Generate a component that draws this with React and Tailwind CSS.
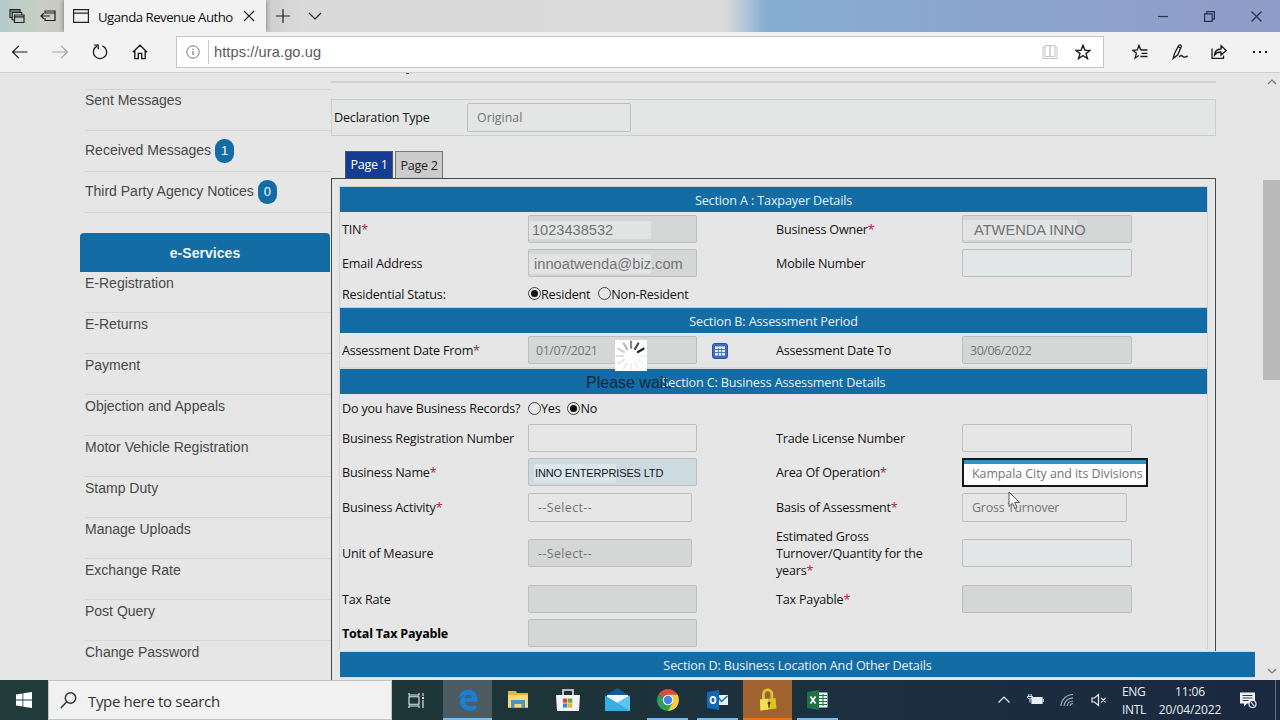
import { useState } from "react";
import clsx from "clsx";

const messages = [
  { label: "Sent Messages" },
  { label: "Received Messages", count: 1 },
  { label: "Third Party Agency Notices", count: 0 },
];

const services = [
  "E-Registration",
  "E-Returns",
  "Payment",
  "Objection and Appeals",
  "Motor Vehicle Registration",
  "Stamp Duty",
  "Manage Uploads",
  "Exchange Rate",
  "Post Query",
  "Change Password",
];

function Icon({ size = 16, box = 16, className, children }) {
  return (
    <svg
      width={size}
      height={size}
      viewBox={`0 0 ${box} ${box}`}
      fill="none"
      stroke="currentColor"
      strokeWidth="1.2"
      className={clsx("block shrink-0", className)}
    >
      {children}
    </svg>
  );
}

function TitleBar() {
  return (
    <div className="flex h-8 shrink-0 bg-[linear-gradient(90deg,#b5ccc8_0px,#c9cfc4_40px,#c8c8c2_64px,#cfcfcf_268px,#dadada_300px,#dadbda_725px,#86aed1_766px,#8ba4cc_1000px,#8f9cc8_1280px)] text-[#222]">
      <div className="flex w-16 items-center gap-[15px] pl-[9px]">
        <Icon>
          <path d="M3 9.500H1V1.500h10V4M1 3h10" />
          <path d="M5.500 7h9.500v7.500H5.500zM5.500 8.800H15M3.200 12V4.500h9.500V7M3.200 12h2" />
        </Icon>
        <Icon>
          <path d="M5 5.500V3h10v9.500H5V10M5 5h10M1 8h9M3.800 5.300L1 8l2.800 2.700" />
        </Icon>
      </div>
      <div className="flex w-[202px] items-center bg-[#f2f2f2] pl-[9px] shadow-[0_0_5px_rgba(0,0,0,0.45)]">
        <Icon>
          <path d="M.6 1.600h14.800v12.800H.6zM.6 5.200h14.800" />
        </Icon>
        <span className="ml-[9px] w-[138px] pt-px text-[13.200px] leading-5 tracking-[-0.5px] whitespace-nowrap text-[#111]">
          Uganda Revenue Autho
        </span>
        <Icon size={12} box={12} className="ml-[7px]">
          <path d="M1 1l10 10M11 1L1 11" />
        </Icon>
      </div>
      <div className="flex flex-1 items-center pl-[10px]">
        <Icon size={14} box={14}>
          <path d="M7 0v14M0 7h14" />
        </Icon>
        <Icon size={14} box={14} className="ml-[18px]">
          <path d="M1 4l6 6 6-6" />
        </Icon>
      </div>
      <div className="flex items-center gap-9 pr-[18px] text-[#25304f]">
        <Icon size={10} box={10}>
          <path d="M0 5.500h10" />
        </Icon>
        <Icon size={11} box={11}>
          <path d="M.6 2.800h7.600v7.600H.6zM2.800 2.600V.6h7.600v7.600H8.400" />
        </Icon>
        <Icon size={11} box={11}>
          <path d="M.5 .5l10 10M10.500 .5l-10 10" />
        </Icon>
      </div>
    </div>
  );
}

function Toolbar() {
  return (
    <div className="flex h-[41px] shrink-0 items-center border-b border-[#cfd1d1] bg-[#f2f2f2] pl-3 text-[#1c1c1c]">
      <div className="flex gap-6">
        <Icon>
          <path d="M.5 8h15M6.800 1.800L.6 8l6.200 6.200" />
        </Icon>
        <Icon className="text-[#a5a5a5]">
          <path d="M.5 8h15M9.200 1.800L15.400 8l-6.200 6.200" />
        </Icon>
        <Icon>
          <path d="M10.400 1.900A6.600 6.600 0 1 1 5 2.200M2.200 1.200h4v4" strokeWidth="1.300" />
        </Icon>
        <Icon>
          <path d="M.8 8.300L8 1.300l7.200 7M2.800 6.800v7.800h3.500V9.400h3.400v5.200h3.500V6.800" strokeWidth="1.400" />
        </Icon>
      </div>
      <div className="ml-7 flex h-8 w-[928px] items-center border border-[#c3c4c4] bg-white pl-[9px]">
        <Icon size={14} box={14} className="text-[#777]">
          <circle cx="7" cy="7" r="6.200" strokeWidth="1" />
          <path d="M7 6v4M7 3.800v1.200" />
        </Icon>
        <span className="ml-[8px] h-6 w-px bg-[#c9c9c9]" />
        <span className="ml-[5px] flex-1 pt-px font-['Liberation_Sans',sans-serif] text-[14.600px] tracking-[0.1px] text-[#5a5a5a]">
          https://ura.go.ug
        </span>
        <Icon className="text-[#c4c4c4]">
          <path d="M3 1.500h5v11H3zM8 1.500h5v11H8z" strokeWidth="1" />
          <path d="M3 3H1v11.500h14V3h-2" strokeWidth="1" />
        </Icon>
        <Icon className="mr-3 ml-[17px]">
          <path d="M8 1.300l1.900 4.900 5.200.2-4.100 3.200 1.500 5L8 11.700l-4.500 2.900 1.500-5L.9 6.400l5.200-.2z" strokeWidth="1.400" />
        </Icon>
      </div>
      <div className="ml-7 flex gap-6">
        <Icon>
          <path d="M9.600 5.600h-1L7 1.500 5.300 6 .8 6.300l3.600 3-1.300 4.800L7 11.500M9 6h6.500M9.500 9.300h6M8.500 12.500h7" strokeWidth="1.300" />
        </Icon>
        <Icon>
          <path d="M1.200 14.500L2.500 9.500 6.600 1.600Q8.500-.2 9.400 2.200L5.800 10.800zM6.300 3l2.400 1.200M7 13q2-2.500 3.500-.8t5.300 0" strokeWidth="1.300" />
        </Icon>
        <Icon className="-ml-px">
          <path d="M1 4.500V14.400h11.500V11.500M3.500 11Q4 5.200 10 5V1.800L15.300 6.500 10 11V8Q6 7.800 3.500 11z" strokeWidth="1.300" />
        </Icon>
        <Icon className="ml-px">
          <path d="M1 8h2M7 8h2M13 8h2" strokeWidth="1.800" />
        </Icon>
      </div>
    </div>
  );
}

function Sidebar() {
  return (
    <div className="ml-20 flex w-[251px] shrink-0 flex-col font-['Liberation_Sans',sans-serif] text-[14px] text-[#484848]">
      <div className="mt-4 ml-[5px] border-t border-[#cdd5d6]">
        {messages.map((m, i) => (
          <div
            key={m.label}
            className={clsx(
              "flex h-[41px] gap-1 border-b border-[#d2d8d9]",
              i === 0 ? "items-start" : "items-center"
            )}
          >
            <span className="mb-px">{m.label}</span>
            {m.count !== undefined && (
              <span className="flex h-6 w-[19px] items-center justify-center rounded-[9px] bg-[#136ca4] text-[13px] text-white">
                {m.count}
              </span>
            )}
          </div>
        ))}
      </div>
      <div className="mt-5 flex h-[39px] w-[250px] shrink-0 items-center justify-center rounded-t-[4px] bg-[#136ca4] pt-px text-[14px] font-bold tracking-[0.05px] text-[#eef5f9]">
        e-Services
      </div>
      <div className="ml-[5px]">
        {services.map((s) => (
          <div key={s} className="h-[41px] border-b border-[#d2d8d9] leading-[23px]">
            {s}
          </div>
        ))}
      </div>
    </div>
  );
}

function SectionBar({ children, className }) {
  return (
    <div
      className={clsx(
        "flex h-[25px] shrink-0 items-center justify-center bg-[#136ca4] pt-[3px] text-[12.600px] tracking-[-0.14px] text-[#e6f3fa]",
        className
      )}
    >
      {children}
    </div>
  );
}

function Row({ className, children }) {
  return (
    <div className={clsx("grid grid-cols-[188px_246px_188px_1fr] items-center", className)}>
      {children}
    </div>
  );
}

function Label({ required, children }) {
  return (
    <span className="pt-px pl-[2px] text-[12.600px] leading-[17px] tracking-[-0.2px] whitespace-nowrap text-[#141414]">
      {children}
      {required && <span className="text-[#b02046]">*</span>}
    </span>
  );
}

function Field({ className, children }) {
  return (
    <span
      className={clsx(
        "flex h-7 items-center rounded-[2px] border border-[#babfbf] pt-[2px] text-[12.400px] whitespace-nowrap text-[#737373]",
        className
      )}
    >
      {children}
    </span>
  );
}

function Radio({ checked, onClick, children }) {
  return (
    <button
      onClick={onClick}
      className="flex items-center text-[12.600px] leading-none tracking-[-0.22px] text-[#141414]"
    >
      <span className="mb-[3px] flex size-[13px] items-center justify-center rounded-full border border-[#444]">
        {checked && <span className="size-[7px] rounded-full bg-[#111]" />}
      </span>
      {children}
    </button>
  );
}

function CalendarIcon() {
  return (
    <svg width="16" height="16" viewBox="0 0 16 16" className="mt-[2px] ml-[15px]">
      <rect x=".5" y=".5" width="15" height="15" rx="2.500" fill="#3f6cc0" stroke="#2a4fa4" />
      <rect x="3" y="3.500" width="10" height="9" fill="#e9f1fb" />
      <path d="M3 6.500h10M3 9.500h10M6.300 5v7.500M9.700 5v7.500" stroke="#4c77c4" />
    </svg>
  );
}

function Spinner() {
  const spokes = [0.5, 0.75, 0.92, 0.04, 0.04, 0.05, 0.06, 0.07, 0.09, 0.12, 0.18, 0.3];
  return (
    <svg width="32" height="31" viewBox="0 0 32 31" className="bg-white">
      {spokes.map((opacity, i) => (
        <path
          key={i}
          d="M16 8V1.500"
          stroke="#111"
          strokeWidth="2.200"
          strokeLinecap="round"
          opacity={opacity}
          transform={`rotate(${i * 30} 16 16)`}
        />
      ))}
    </svg>
  );
}

function AssessmentForm() {
  const [resident, setResident] = useState(true);
  const [records, setRecords] = useState(false);

  return (
    <>
      <SectionBar>Section A : Taxpayer Details</SectionBar>
      <Row className="h-[34px]">
        <Label required>TIN</Label>
        <Field className="w-[169px] bg-[#d5d7d7]">
          <span className="flex h-[18px] w-[122px] items-center bg-[#e2e4e4] pt-px pl-[3px] font-['Liberation_Sans',sans-serif] text-[14.600px]">
            1023438532
          </span>
        </Field>
        <Label required>Business Owner</Label>
        <Field className="w-[170px] bg-[#d5d7d7]">
          <span className="flex h-[20px] w-[114px] items-center bg-[#e2e4e4] pl-[11px] font-['Liberation_Sans',sans-serif] text-[14.700px] tracking-[-0.05px]">
            ATWENDA INNO
          </span>
        </Field>
      </Row>
      <Row className="h-[34px]">
        <Label>Email Address</Label>
        <Field className="w-[169px] bg-[#d5d7d7]">
          <span className="flex h-[20px] w-[122px] items-center bg-[#e2e4e4] pl-[5px] font-['Liberation_Sans',sans-serif] text-[14.700px]">
            innoatwenda@biz.com
          </span>
        </Field>
        <Label>Mobile Number</Label>
        <Field className="w-[170px] bg-[#e3e6e6]" />
      </Row>
      <Row className="h-[28px] border-b border-[#c9cfcf]">
        <Label>Residential Status:</Label>
        <span className="flex gap-2 pt-[3px]">
          <Radio checked={resident} onClick={() => setResident(true)}>
            Resident
          </Radio>
          <Radio checked={!resident} onClick={() => setResident(false)}>
            Non-Resident
          </Radio>
        </span>
      </Row>

      <SectionBar>Section B: Assessment Period</SectionBar>
      <Row className="h-9 border-b-2 border-[#d3d9d9]">
        <Label required>Assessment Date From</Label>
        <span className="flex items-center">
          <Field className="w-[169px] bg-[#d5d7d7] pl-[7px] tracking-[-0.43px]">01/07/2021</Field>
          <CalendarIcon />
        </span>
        <Label>Assessment Date To</Label>
        <Field className="w-[170px] bg-[#d5d7d7] pl-[7px] tracking-[-0.43px]">30/06/2022</Field>
      </Row>

      <SectionBar>Section C: Business Assessment Details</SectionBar>
      <Row className="h-[27px]">
        <Label>Do you have Business Records?</Label>
        <span className="flex gap-[7px] pt-[4px]">
          <Radio checked={records} onClick={() => setRecords(true)}>
            Yes
          </Radio>
          <Radio checked={!records} onClick={() => setRecords(false)}>
            No
          </Radio>
        </span>
      </Row>
      <Row className="h-[34px]">
        <Label>Business Registration Number</Label>
        <Field className="w-[169px]" />
        <Label>Trade License Number</Label>
        <Field className="w-[170px]" />
      </Row>
      <Row className="h-[34px]">
        <Label required>Business Name</Label>
        <Field className="w-[169px] bg-[#cddae0]">
          <span className="ml-[5px] flex h-[19px] w-[82px] items-center bg-[#d9e6eb] pt-px pl-px font-['Liberation_Sans',sans-serif] text-[11px] tracking-[-0.15px] text-[#161616]">
            INNO ENTERPRISES LTD
          </span>
        </Field>
        <Label required>Area Of Operation</Label>
        <span className="h-[29px] w-[186px] border-2 border-[#14181c] bg-white">
          <span className="block h-full border-t-4 border-[#3393c0] pl-2 text-[12.400px] leading-[19px] tracking-[-0.04px] whitespace-nowrap text-[#737373]">
            Kampala City and its Divisions
          </span>
        </span>
      </Row>
      <Row className="h-[36px]">
        <Label required>Business Activity</Label>
        <Field className="h-[29px] w-[164px] pl-[9px] tracking-[0.4px]">--Select--</Field>
        <Label required>Basis of Assessment</Label>
        <Field className="h-[29px] w-[165px] pl-[9px] tracking-[-0.15px]">Gross Turnover</Field>
      </Row>
      <Row className="h-[56px]">
        <Label>Unit of Measure</Label>
        <Field className="w-[164px] bg-[#d5d7d7] pl-[9px] tracking-[0.4px]">--Select--</Field>
        <Label required>
          Estimated Gross
          <br />
          Turnover/Quantity for the
          <br />
          years
        </Label>
        <Field className="w-[170px] bg-[#e3e6e6]" />
      </Row>
      <Row className="h-[35px]">
        <Label>Tax Rate</Label>
        <Field className="w-[169px] bg-[#d5d7d7]" />
        <Label required>Tax Payable</Label>
        <Field className="w-[170px] bg-[#d5d7d7]" />
      </Row>
      <Row className="h-[33px]">
        <span className="pt-[4px] pl-[2px] text-[12.500px] font-bold tracking-[-0.2px] text-black">
          Total Tax Payable
        </span>
        <Field className="w-[169px] bg-[#d5d7d7]" />
      </Row>
    </>
  );
}

function MainPanel() {
  return (
    <div className="flex w-[885px] shrink-0 flex-col">
      <div className="h-2 shrink-0 pl-[75px]">
        <div className="h-px w-[3px] bg-[#555]" />
      </div>
      <div className="h-[2px] shrink-0 bg-[#cfd3d3]" />
      <div className="mt-4 flex h-[37px] shrink-0 items-center border border-[#c9cece] bg-[#e4e6e6] pl-[2px]">
        <span className="w-[133px] pt-[2px] text-[12.600px] tracking-[-0.2px] text-[#141414]">
          Declaration Type
        </span>
        <Field className="h-[29px] w-[164px] pl-[9px]">Original</Field>
      </div>
      <div className="mt-[15px] flex h-[27px] shrink-0 gap-[2px] pl-[14px] text-[12.600px] tracking-[-0.3px]">
        <div className="flex w-12 items-center justify-center border border-b-0 border-[#555] bg-[#143c92] text-white">
          Page 1
        </div>
        <div className="flex w-12 items-center justify-center border border-b-0 border-[#777] bg-[#cbcbcb] pt-[2px] text-[#222]">
          Page 2
        </div>
      </div>
      <div className="flex-1 border-t border-l border-[#484848]">
        <div className="h-[472px] border-r border-[#484848] pt-[7px] pl-[7px]">
          <div className="w-[869px] border-x border-t border-[#ccd2d2]">
            <AssessmentForm />
          </div>
        </div>
        <SectionBar className="ml-2 h-[27px] w-[915px] border-y border-[#d3dadd]">
          Section D: Business Location And Other Details
        </SectionBar>
      </div>
    </div>
  );
}

function Scrollbar() {
  return (
    <div className="ml-auto flex w-[17px] flex-col items-center pt-1 pb-1 text-[#777]">
      <Icon size={10} box={10}>
        <path d="M1 7l4-4 4 4" />
      </Icon>
      <div className="mt-[93px] h-[200px] w-full bg-[#b9b9b9]" />
      <Icon size={10} box={10} className="mt-auto">
        <path d="M1 3l4 4 4-4" />
      </Icon>
    </div>
  );
}

function TaskButton({ state, children }) {
  return (
    <div
      className={clsx(
        "flex h-full items-center justify-center border-b-2",
        state === "active" && "w-[49px] border-[#76b9ed] bg-[#4b5d62]",
        state === "alert" && "w-[49px] border-[#f07010] bg-[#a0622f]",
        state === "open" && "mx-1 w-[41px] border-[#76b9ed]",
        !state && "w-[49px] border-transparent"
      )}
    >
      {children}
    </div>
  );
}

function Taskbar() {
  return (
    <div className="flex h-10 shrink-0 bg-[linear-gradient(90deg,#213a3a_0%,#1d3438_40%,#1b3040_65%,#1b2840_100%)] text-[#e8eef2]">
      <div className="flex w-12 items-center justify-center">
        <svg width="16" height="16" viewBox="0 0 16 16" fill="#fff">
          <path d="M0 2.400L6.500 1.400V7.600H0zM7.300 1.300L16 0v7.600H7.300zM0 8.400h6.500v6.200L0 13.600zM7.300 8.400H16V16l-8.700-1.300z" />
        </svg>
      </div>
      <div className="flex w-[344px] items-center border border-[#bfc4c4] bg-[#f1f1f1] pl-[11px] text-[#333]">
        <Icon size={17} box={17}>
          <circle cx="10.500" cy="6" r="5.200" strokeWidth="1.500" />
          <path d="M6.800 9.700L.8 15.900" strokeWidth="1.500" />
        </Icon>
        <span className="ml-[11px] pt-[3px] text-[15px] tracking-[-0.33px]">Type here to search</span>
      </div>
      <div className="flex w-12 items-center justify-center">
        <Icon size={17} box={17}>
          <path d="M1 1v2h10V1M1 4.800h10v7.400H1zM1 16v-2h10v2M15 1v3M15 8v8" strokeWidth="1.100" />
          <path d="M14 5h2v2h-2z" fill="currentColor" stroke="none" />
        </Icon>
      </div>
      <div className="flex items-center gap-px pl-[3px]">
        <TaskButton state="active">
          <svg width="20" height="22" viewBox="0 0 20 22" className="mt-[2px]">
            <path
              d="M.5 9.500C1.500 3.500 5.500.8 10.300.8c5.700 0 9 4.200 9 9.200v2.800H6.800c.2 3 2.800 4.400 5.800 4.400 2.200 0 4-.6 5.500-1.500v4.200c-2 1-4.200 1.500-6.700 1.500C5.800 21.400 2 18 2 13.300c0-3.300 1.700-5.800 4.600-7.300C4 6.200 1.800 7.600.5 9.500zM7 9.200h6.500c0-2.200-1-3.500-3-3.500S7.300 7.200 7 9.200z"
              fill="#1a80d6"
              fillRule="evenodd"
            />
          </svg>
        </TaskButton>
        <TaskButton>
          <svg width="22" height="18" viewBox="0 0 22 18" className="mt-[2px]">
            <path d="M1 0h8l1 2h11v15H1z" fill="#e8b13a" />
            <path d="M1 4h20v12H1z" fill="#f9d977" />
            <path d="M4 9h14v8h-3.500v-4h-7v4H4z" fill="#4c93c6" />
          </svg>
        </TaskButton>
        <TaskButton>
          <svg width="24" height="24" viewBox="0 0 24 24" className="mt-[2px]">
            <path d="M7 8V2h10v6" fill="none" stroke="#e8e8e8" strokeWidth="1.600" />
            <path d="M0 7h24l-1 16H1z" fill="#f3f3f3" />
            <path d="M7 10.500h4.300v4.200H7z" fill="#d9492a" />
            <path d="M12 10.500h4.300v4.200H12z" fill="#6fa52c" />
            <path d="M7 15.400h4.300v4.200H7z" fill="#2b8fd0" />
            <path d="M12 15.400h4.300v4.200H12z" fill="#eeb11f" />
          </svg>
        </TaskButton>
        <TaskButton>
          <svg width="25" height="23" viewBox="0 0 25 23">
            <path d="M0 8L12.500 0 25 8v3H0z" fill="#15599d" />
            <path d="M2 7h21v9H2z" fill="#f4f8fb" />
            <path d="M0 7.500l12.500 7.500L25 7.500V23H0z" fill="#35aee4" />
            <path d="M25 7.500V23L12 14.700z" fill="#58c6f2" />
          </svg>
        </TaskButton>
        <TaskButton state="open">
          <svg width="22" height="22" viewBox="0 0 22 22" className="mt-[2px]">
            <path d="M11 11L1.500 5.500A11 11 0 0 1 20.500 5.500H11z" fill="#dd4b3e" />
            <path d="M11 5.500h9.500A11 11 0 0 1 11 22l-1-2 2-9z" fill="#f8cd3b" />
            <path d="M11 11L1.500 5.500A11 11 0 0 0 11 22l4.500-8z" fill="#2f9e55" />
            <circle cx="11" cy="11" r="5.300" fill="#f4f6f8" />
            <circle cx="11" cy="11" r="4.200" fill="#4583e8" />
          </svg>
        </TaskButton>
        <TaskButton state="open">
          <svg width="22" height="20" viewBox="0 0 22 20" className="mt-[2px]">
            <path d="M10 5h11v10H10z" fill="#e9f2f9" />
            <path d="M11 7l3.500 4.500L20.500 6" fill="none" stroke="#1069b5" strokeWidth="1.400" />
            <path d="M0 2l12-2v20L0 18z" fill="#1069b5" />
            <ellipse cx="6" cy="10" rx="2.500" ry="3.200" fill="none" stroke="#fff" strokeWidth="1.800" />
          </svg>
        </TaskButton>
        <TaskButton state="alert">
          <svg width="20" height="24" viewBox="0 0 20 24" className="mt-[2px]">
            <path d="M5.500 12V6.500a4.200 4.200 0 0 1 8.400-.8V11" fill="none" stroke="#d9c432" strokeWidth="2.800" />
            <path d="M2 11.500L17.500 10l1 10.500-16 2z" fill="#ddc524" />
            <path d="M2 11.500l8-.8v11l-7.500.8z" fill="#f0e054" />
            <circle cx="11" cy="15" r="1.500" fill="#4d3c10" />
            <path d="M10.300 15h1.400v4.500h-1.400z" fill="#4d3c10" />
          </svg>
        </TaskButton>
        <TaskButton state="open">
          <svg width="21" height="20" viewBox="0 0 21 20" className="mt-[2px]">
            <path d="M11 2.500h9.500v15H11z" fill="#eff6f1" />
            <path d="M12 5.500h8M12 8.500h8M12 11.500h8M12 14.500h8M16 4v12" stroke="#1d7244" />
            <path d="M0 2l12-2v20L0 18z" fill="#1d7244" />
            <path d="M3.500 6.500l5 7M8.500 6.500l-5 7" stroke="#fff" strokeWidth="1.700" />
          </svg>
        </TaskButton>
      </div>
      <div className="ml-auto flex items-center">
        <Icon size={14} box={14} className="mr-[16px]">
          <path d="M1.500 9.500L7 4l5.500 5.500" />
        </Icon>
        <Icon size={17} box={17} className="mr-[16px]">
          <path d="M5 5.500h10v6H5z" fill="currentColor" />
          <path d="M16.300 7v3M1.800 2v2M4.200 2v2M.5 4.500h5v1.300Q3 8.500.5 5.800zM3 7.500v3" strokeWidth="1" />
        </Icon>
        <Icon size={14} box={14} className="mr-[17px] text-[#a9b4bf]">
          <path d="M1 13A12 12 0 0 1 13 1.500M4 13a9 9 0 0 1 9-8.200M7 13a6 6 0 0 1 6-5M10 13a3 3 0 0 1 3-2.500" />
        </Icon>
        <Icon size={16} box={16} className="mr-[15px]">
          <path d="M1 6h2.500L7.500 2.500v11L3.500 10H1zM10 5.800l4.500 4.500M14.500 5.800L10 10.300" />
        </Icon>
        <div className="flex w-[27px] flex-col pt-[2px] text-[12px] leading-[18px] tracking-[-0.3px]">
          <span>ENG</span>
          <span>INTL</span>
        </div>
        <div className="ml-[5px] flex w-[72px] flex-col items-center pt-[2px] text-[12px] leading-[18px] tracking-[-0.12px]">
          <span>11:06</span>
          <span>20/04/2022</span>
        </div>
        <Icon size={18} box={18} className="ml-[13px]">
          <path d="M1 1.500h15v11H8l-3 3v-3H1z" fill="#f2f5f7" stroke="none" />
          <path d="M3.500 4.500h10M3.500 7h10M3.500 9.500h6" stroke="#2a3a50" strokeWidth="1" />
          <circle cx="13.500" cy="13" r="3.500" fill="#1b2840" />
          <path d="M12 11l3 4" />
        </Icon>
        <span className="ml-[18px] h-full w-px bg-[#66717f]" />
        <span className="w-1" />
      </div>
    </div>
  );
}

export default function App() {
  return (
    <div className="relative flex h-[720px] w-[1280px] flex-col overflow-hidden bg-[#e6e6e6] font-['Open_Sans',sans-serif]">
      <TitleBar />
      <Toolbar />
      <div className="flex h-[607px] shrink-0 overflow-hidden">
        <Sidebar />
        <MainPanel />
        <Scrollbar />
      </div>
      <Taskbar />

      {/* loading overlay */}
      <div className="absolute top-[340px] left-[586px] flex flex-col">
        <div className="ml-[29px]">
          <Spinner />
        </div>
        <span className="mt-[2px] font-['Liberation_Sans',sans-serif] text-[16px] leading-5 text-[#0b2a44]">
          Please wait.
        </span>
      </div>

      {/* mouse pointer */}
      <svg width="13" height="19" viewBox="0 0 13 19" className="absolute top-[491px] left-[1008px]">
        <path
          d="M1 1v14.500l3.500-3.300 2.300 5.300 2.200-1-2.300-5.100h4.800z"
          fill="#fff"
          stroke="#444"
          strokeWidth=".9"
        />
      </svg>
    </div>
  );
}
